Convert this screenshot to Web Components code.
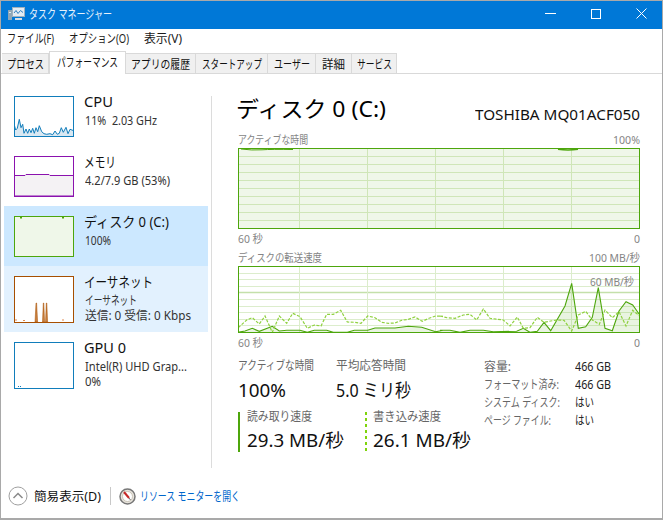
<!DOCTYPE html>
<html lang="ja"><head><meta charset="utf-8">
<style>
html,body{margin:0;padding:0;background:#fff}
body{width:663px;height:520px;overflow:hidden;font-family:"Noto Sans","Noto Sans CJK JP",sans-serif;font-size:12px;color:#000}
</style></head><body>
<tm-window>
  <tm-titlebar slot="top"></tm-titlebar>
  <tm-menu slot="top"></tm-menu>
  <tm-tabs slot="top"></tm-tabs>
  <tm-side slot="side">
    <tm-item kind="cpu" name="CPU" nw="29"><tm-fit w="72">11%&nbsp; 2.03 GHz</tm-fit></tm-item>
    <tm-item kind="mem" name="メモリ" nw="32"><tm-fit w="85">4.2/7.9 GB (53%)</tm-fit></tm-item>
    <tm-item kind="disk" name="ディスク 0 (C:)" nw="85" state="sel"><tm-fit w="26">100%</tm-fit></tm-item>
    <tm-item kind="net" name="イーサネット" nw="69" state="hover" tall><tm-fit w="52">イーサネット</tm-fit><tm-fit w="106">送信: 0 受信: 0 Kbps</tm-fit></tm-item>
    <tm-item kind="gpu" name="GPU 0" nw="42" tall><tm-fit w="102">Intel(R) UHD Grap...</tm-fit><tm-fit w="16">0%</tm-fit></tm-item>
  </tm-side>
  <tm-detail slot="main"></tm-detail>
  <tm-footer slot="foot"></tm-footer>
</tm-window>
<script>
const C={cpu:'#117dbb',mem:'#8b12ae',disk:'#4da60c',net:'#a74f01',gpu:'#117dbb'};
const FITS=[];
function sh(el,html){el.attachShadow({mode:'open'}).innerHTML=html}
function pts(a,ox,oy,dx,dy){return a.map(p=>((ox+p[0]/3-dx).toFixed(1))+','+((oy+p[1]/3-dy).toFixed(1))).join(' ')}
const F=(w,t)=>`<tm-fit w="${w}">${t}</tm-fit>`;

customElements.define('tm-fit',class extends HTMLElement{connectedCallback(){
 if(this.shadowRoot)return;
 sh(this,`<style>:host{display:inline-block;white-space:nowrap;width:${this.getAttribute('w')}px}
 span{display:inline-block;transform-origin:0 50%}</style><span><slot></slot></span>`);FITS.push(this)}
 fit(){const s=this.shadowRoot.querySelector('span');s.style.transform=`scaleX(${+this.getAttribute('w')/s.getBoundingClientRect().width})`}
});

customElements.define('tm-window',class extends HTMLElement{constructor(){super();sh(this,`<style>
:host{display:flex;flex-direction:column;width:663px;height:520px;box-sizing:border-box;border:1px solid #a9a9a9;border-width:1px 1px 2px 1px;background:#fff;overflow:hidden}
.body{flex:1;display:flex;min-height:0}
.foot{height:46px}
</style><slot name="top"></slot><div class="body"><slot name="side"></slot><slot name="main"></slot></div><div class="foot"><slot name="foot"></slot></div>`)}});

customElements.define('tm-titlebar',class extends HTMLElement{constructor(){super();sh(this,`<style>
:host{display:flex;align-items:center;box-sizing:border-box;height:28px;padding-bottom:3px;background:#0078d7;color:#fff;font-size:12.5px}
.ic{width:17px;height:14px;margin:0 4px 0 7px}
.t{flex:1;color:#e6f1fb}
.b{width:45px;height:25px;display:flex;align-items:center;justify-content:center;flex:none}
.m{margin-right:1px}.c{margin-right:-2px}
svg{display:block}
</style>
<svg class="ic" viewBox="0 0 17 14"><rect x="0" y="3" width="4" height="10" fill="#8fa6b5"/><rect x="1" y="5" width="2" height="1" fill="#dfe8ee"/><rect x="4.500" y=".5" width="12" height="9" fill="#e4ecf3" stroke="#9fb1bf"/><path d="M6 6 8 3.500l2 3 2.500-3 2.500 2" fill="none" stroke="#2f7fc0"/><rect x="7" y="11" width="7" height="2" fill="#d4dde3"/></svg>
<div class="t">${F(83,'タスク マネージャー')}</div>
<div class="b"><svg width="11" height="1"><rect width="11" height="1" fill="#fff"/></svg></div>
<div class="b m"><svg width="10" height="10"><rect x=".5" y=".5" width="9" height="9" fill="none" stroke="#fff"/></svg></div>
<div class="b c"><svg width="11" height="11"><path d="M.5.5l10 10M10.500.5l-10 10" stroke="#fff" fill="none"/></svg></div>`)}});

customElements.define('tm-menu',class extends HTMLElement{constructor(){super();sh(this,`<style>
:host{display:flex;height:18px;align-items:center;padding-left:6px;gap:15px;font-size:12px;color:#1a1a1a}
</style>${F(47,'ファイル(F)')}${F(60,'オプション(O)')}${F(38,'表示(V)')}`)}});

customElements.define('tm-tabs',class extends HTMLElement{constructor(){super();
const tabs=[['プロセス',47,37],['パフォーマンス',77,61,1],['アプリの履歴',70,59],['スタートアップ',72,60],['ユーザー',48,36],['詳細',36,23],['サービス',45,35]];
sh(this,`<style>
:host{display:flex;height:27px;box-sizing:border-box;padding:0 0 0 1px;border-bottom:1px solid #d9d9d9;align-items:flex-end;font-size:12px}
.t{box-sizing:border-box;height:20px;display:flex;align-items:center;justify-content:center;background:#f0f0f0;border:1px solid #d9d9d9;border-bottom:0;border-left:0;color:#111}
.t:first-child{border-left:1px solid #d9d9d9}
.a{height:23px;background:#fff;margin-bottom:-1px;border-left:1px solid #d9d9d9;padding-bottom:2px}
</style>`+tabs.map(t=>`<div class="t${t[3]?' a':''}" style="width:${t[1]}px">${F(t[2],t[0])}</div>`).join(''))}});

customElements.define('tm-side',class extends HTMLElement{constructor(){super();sh(this,`<style>
:host{display:block;box-sizing:border-box;width:207px;padding:12px 0 0 3px;flex:none}
</style><slot></slot>`)}});

customElements.define('tm-thumb',class extends HTMLElement{connectedCallback(){
const k=this.getAttribute('kind'),h=+this.getAttribute('h'),c=C[k];let inner='';
if(k==='cpu'){const p=[[43,120],[47,135],[52,130],[58,103],[63,128],[68,118],[72,145],[78,132],[83,145],[88,132],[93,143],[98,130],[103,145],[108,128],[113,140],[118,122],[125,140],[132,146],[140,148],[150,146],[158,149],[165,138],[172,148],[178,145],[184,128],[190,142],[198,127],[204,146],[210,133],[221,137]];
const s=pts(p,0,85,14,96);inner=`<polygon points="0,40 ${s} 60,40" fill="#d9e8f2"/><polyline points="${s}" fill="none" stroke="${c}"/>`}
if(k==='mem'){inner=`<path d="M0 19.500H11l1-1H35l1 1H60V40H0Z" fill="#f4f2f4" stroke="${c}"/>`}
if(k==='disk'){inner=`<rect width="60" height="40" fill="#eff7e9"/><path d="M6 1.500h2M48 1.500h2" stroke="${c}" stroke-width="2"/>`}
if(k==='net'){inner=`<path d="M21 46l1-19h.6l1 19zM28.500 46l.8-19h.5l.8 19zM31.500 46l.8-19h.5l.8 19z" fill="#c9803f" stroke="${c}" stroke-width=".5"/><path d="M2 45v-2M9 44.500h2M49 45v-2" stroke="#e08a50"/>`}
if(k==='gpu'){inner=`<path d="M4 44.500h1M6 44.500h1" stroke="${c}"/>`}
sh(this,`<style>:host{display:block;box-sizing:border-box;width:60px;height:${h}px;border:1px solid ${c};background:#fff;flex:none;overflow:hidden}
svg{display:block}</style><svg width="58" height="${h-2}" viewBox="1 1 58 ${h-2}">${inner}</svg>`)}});

customElements.define('tm-item',class extends HTMLElement{connectedCallback(){
const k=this.getAttribute('kind'),tall=this.hasAttribute('tall');
sh(this,`<style>
:host{display:flex;box-sizing:border-box;height:${tall?66:60}px;padding:10px 0 0 10px;gap:10px}
:host([state=sel]){background:#cce8ff}
:host([state=hover]){background:#e2f1fe}
.tx{display:flex;flex-direction:column;margin-top:-5px}
.n{font-size:14px;line-height:21px;color:#111}
.s{font-size:12px;line-height:15px;color:#333;display:flex;flex-direction:column;padding-left:1px;margin-top:1px}
::slotted(tm-fit){display:block}
</style><tm-thumb kind="${k}" h="${tall?47:41}"></tm-thumb><div class="tx"><div class="n">${F(this.getAttribute('nw'),this.getAttribute('name'))}</div><div class="s"><slot></slot></div></div>`)}});

customElements.define('tm-graph',class extends HTMLElement{connectedCallback(){
const h=+this.getAttribute('h'),mode=this.getAttribute('mode');let g='';
const vx=[299,367,435,503,571];
const gc=mode==='a'?'#cfe6b8':'#dcedcc';
if(mode==='a'){g+=`<rect width="402" height="${h}" fill="#eff7e9"/>`;
 for(let y=8;y<h;y+=8)g+=`<path d="M0 ${y+.5}H402" stroke="${gc}"/>`;
 vx.forEach(x=>g+=`<path d="M${x-238+.5} 0V${h}" stroke="${gc}"/>`);
 g+=`<path d="M3 1Q14 2.500 24 1.800T55 1.500" stroke="#4da60c" stroke-width="1" fill="none"/><path d="M320 1.200Q330 2.600 340 1.200" stroke="#4da60c" stroke-width="1.500" fill="none"/>`;
}else{
 for(let i=1;i<10;i++){const y=Math.round(i*6.6);g+=`<path d="M0 ${y+.5}H402" stroke="${i==4?'#c4e0aa':gc}"${i==4?' stroke-width="1.500"':''}/>`}
 vx.forEach(x=>g+=`<path d="M${x-238+.5} 0V${h}" stroke="${gc}"/>`);
 const d6=[[40,262],[60,258],[82,250],[103,259],[142,244],[163,258],[185,256],[225,256],[247,262],[268,256],[305,256],[325,262],[367,262],[388,256],[428,256],[450,249],[510,249],[550,244],[590,247],[632,260],[654,256]];
 const d7=[[0,256],[30,256],[60,262],[90,256],[130,256],[160,260],[230,259],[250,250],[270,262],[292,259],[312,232],[332,257],[375,183],[395,115],[415,250],[437,245],[457,217],[475,128],[495,250],[517,257],[537,198],[558,170],[578,180],[598,208]];
 const l6=[[40,248],[65,225],[82,218],[103,237],[120,213],[142,262],[163,213],[185,235],[203,205],[225,215],[247,250],[268,240],[288,243],[305,208],[325,208],[347,196],[367,231],[388,232],[408,235],[428,213],[450,218],[470,232],[490,235],[510,234],[530,226],[550,223],[570,216],[592,229],[612,220],[632,213],[654,214]];
 const l7=[[0,213],[20,218],[45,220],[70,210],[90,208],[110,225],[130,192],[150,220],[190,225],[210,243],[232,216],[250,250],[270,248],[292,217],[312,232],[332,228],[352,225],[372,226],[395,258],[415,210],[437,199],[457,225],[478,238],[495,195],[517,218],[537,200],[558,243],[578,196],[598,212]];
 const dk=pts(d6,225,245,238,266)+' '+pts(d7,440,245,238,266),lt=pts(l6,225,245,238,266)+' '+pts(l7,440,245,238,266);
 g+=`<polygon points="0,67 ${dk} 402,67" fill="#4da60c" fill-opacity=".12"/><polyline points="${dk}" fill="none" stroke="#4da60c" stroke-width="1.100"/><polyline points="${lt}" fill="none" stroke="#8fd13f" stroke-width="1.200" stroke-dasharray="3 1.500"/>`;
}
sh(this,`<style>:host{display:block;box-sizing:border-box;width:402px;height:${h+1}px;border:1px solid #4da60c;position:relative;background:#fff}
svg{display:block}
.o{position:absolute;right:5px;top:8px;font-size:11.500px;line-height:14px;color:#858585}</style>
<svg width="400" height="${h-1}" viewBox="1 1 400 ${h-1}">${g}</svg>${mode==='b'?`<div class="o">${F(44,'60 MB/秒')}</div>`:''}`)}});

customElements.define('tm-cap',class extends HTMLElement{connectedCallback(){
sh(this,`<style>:host{display:flex;justify-content:space-between;width:402px;height:18px;align-items:center;font-size:11.500px;color:#858585}</style>${F(this.getAttribute('lw'),this.getAttribute('l'))}${F(this.getAttribute('rw'),this.getAttribute('r'))}`)}});

customElements.define('tm-stat',class extends HTMLElement{connectedCallback(){
const b=this.getAttribute('bar');
const box=b==='solid'?'background:linear-gradient(#4da60c,#4da60c) left top/2px 100% no-repeat;padding-left:9px;':b==='dash'?'background:repeating-linear-gradient(#7fd40c 0 3px,transparent 3px 6px) left top/2px 100% no-repeat;padding-left:8px;':'';
sh(this,`<style>:host{display:block;box-sizing:border-box;height:40px;${box}}
.l{font-size:12px;line-height:${b?10:14}px;color:#666}
.v{font-size:18px;line-height:26px;margin-top:${b?5:4}px;color:#111}</style>
<div class="l">${F(this.getAttribute('lw'),this.getAttribute('l'))}</div><div class="v">${F(this.getAttribute('vw'),this.getAttribute('v'))}</div>`)}});

customElements.define('tm-detail',class extends HTMLElement{constructor(){super();sh(this,`<style>
:host{display:block;flex:none;width:451px;position:relative;box-sizing:border-box;margin:22px 0 0 3px;padding-left:26px;border-left:1px solid #dcdcdc;height:372px}
.h{display:flex;justify-content:space-between;align-items:flex-end;width:403px;height:30px;margin-top:-3px;margin-left:-1px}
.h b{font-weight:400;font-size:22px;line-height:30px;color:#000;margin-left:-1px}
.h i{font-style:normal;font-size:15px;line-height:20px;color:#111;margin-bottom:-1px}
.cap1{margin-top:7px}
.gap{height:1px}
.stats{display:grid;grid-template-columns:246px auto;margin-top:8px}
.left{display:grid;grid-template-columns:98px auto;grid-template-rows:53px 40px}
.left2{display:grid;grid-template-columns:127px auto;grid-column:1/3}
.tb{display:grid;grid-template-columns:91px auto;grid-auto-rows:18px;align-items:center;font-size:12px;height:72px;margin-top:-2px}
.tb .k{color:#666}.tb .w{color:#222}
</style>
<div class="h"><b>${F(150,'ディスク 0 (C:)')}</b><i>${F(165,'TOSHIBA MQ01ACF050')}</i></div>
<tm-cap class="cap1" l="アクティブな時間" lw="70" r="100%" rw="27"></tm-cap>
<tm-graph h="80" mode="a"></tm-graph>
<tm-cap l="60 秒" lw="25" r="0" rw="6"></tm-cap>
<div class="gap"></div>
<tm-cap l="ディスクの転送速度" lw="84" r="100 MB/秒" rw="51"></tm-cap>
<tm-graph h="66" mode="b"></tm-graph>
<tm-cap l="60 秒" lw="25" r="0" rw="6"></tm-cap>
<div class="stats"><div class="left">
<tm-stat l="アクティブな時間" lw="76" v="100%" vw="48"></tm-stat><tm-stat l="平均応答時間" lw="70" v="5.0 ミリ秒" vw="75"></tm-stat>
<div class="left2"><tm-stat bar="solid" l="読み取り速度" lw="65" v="29.3 MB/秒" vw="97"></tm-stat><tm-stat bar="dash" l="書き込み速度" lw="68" v="26.1 MB/秒" vw="98"></tm-stat></div>
</div><div class="tb">
<span class="k">${F(27,'容量:')}</span><span class="w">${F(36,'466 GB')}</span>
<span class="k">${F(75,'フォーマット済み:')}</span><span class="w">${F(36,'466 GB')}</span>
<span class="k">${F(76,'システム ディスク:')}</span><span class="w">${F(19,'はい')}</span>
<span class="k">${F(67,'ページ ファイル:')}</span><span class="w">${F(19,'はい')}</span>
</div></div>`)}});

customElements.define('tm-footer',class extends HTMLElement{constructor(){super();sh(this,`<style>
:host{display:flex;align-items:center;height:46px;box-sizing:border-box;padding:2px 0 0 7px;font-size:12px}
svg{display:block;flex:none}
.sep{width:1px;height:18px;background:#c8c8c8;margin:0 8px 0 9px}
.a{margin-left:6px;color:#111}
.l{margin-left:4px;color:#0066cc}
</style>
<svg width="20" height="20" viewBox="0 0 20 20"><circle cx="10" cy="10" r="9" fill="#fff" stroke="#a0a0a0"/><path d="M5.500 12 10 7.500l4.500 4.500" fill="none" stroke="#8a8a8a" stroke-width="1.500"/></svg>
<span class="a">${F(67,'簡易表示(D)')}</span><span class="sep"></span>
<svg width="17" height="17" viewBox="0 0 17 17"><circle cx="8.500" cy="8.500" r="7.500" fill="#e8e4dc" stroke="#777" stroke-width="1.500"/><circle cx="8.500" cy="8.500" r="5" fill="#fff" stroke="#c9c4b8"/><path d="M5 4 10 10" stroke="#c62828" stroke-width="2"/><path d="M10 10l1.500 2" stroke="#666"/></svg>
<span class="l">${F(100,'リソース モニターを開く')}</span>`)}});
FITS.forEach(f=>f.fit());
</script>
</body></html>
